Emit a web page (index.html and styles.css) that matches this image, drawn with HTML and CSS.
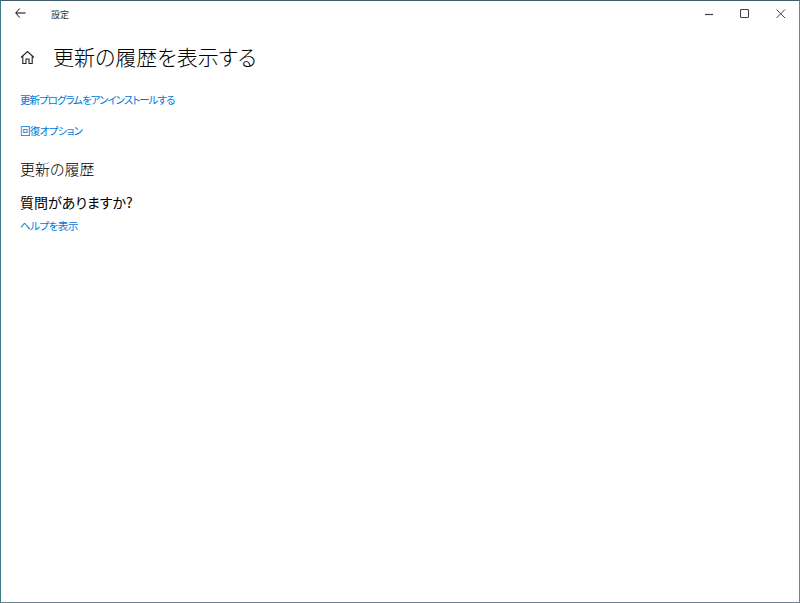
FILE: index.html
```html
<!DOCTYPE html>
<html lang="ja">
<head>
    <meta charset="UTF-8">
    <meta name="viewport" content="width=device-width, initial-scale=1.0">
    <title>設定</title>
    <link rel="stylesheet" href="styles.css">
</head>
<body>
    <div class="window">
        <div class="titlebar">
            <div class="titlebar-left">
                <svg class="back-icon" width="11" height="10" viewBox="0 0 11 10">
                    <path d="M4.700 .5 .7 5 4.700 9.500M1 5H10.500" fill="none" stroke="#000" stroke-width="1"/>
                </svg>
                <span class="app-title">設定</span>
            </div>
            <div class="window-buttons">
                <svg width="10" height="10" viewBox="0 0 10 10"><path d="M1 5.500H9" stroke="#444" stroke-width="1.200"/></svg>
                <svg width="10" height="10" viewBox="0 0 10 10"><rect x=".5" y=".5" width="8" height="8" rx="1" fill="none" stroke="#444" stroke-width="1.100"/></svg>
                <svg width="10" height="10" viewBox="0 0 10 10"><path d="M.5 .5 9 9M9 .5 .5 9" stroke="#444" stroke-width="1"/></svg>
            </div>
        </div>
        <div class="content">
            <div class="page-header">
                <svg class="home-icon" width="15" height="15" viewBox="0 0 15 15">
                    <path d="M1 7.500 7.500 1.500 14 7.500M2.800 6V13.500H6V9H9V13.500H12.200V6" fill="none" stroke="#222" stroke-width="1.100"/>
                </svg>
                <h1>更新の履歴を表示する</h1>
            </div>
            <a class="link uninstall" href="#">更新プログラムをアンインストールする</a>
            <a class="link recovery" href="#">回復オプション</a>
            <h2 class="history">更新の履歴</h2>
            <h2 class="question">質問がありますか?</h2>
            <a class="link help" href="#">ヘルプを表示</a>
        </div>
    </div>
</body>
</html>
```

FILE: styles.css
```css
* {
    box-sizing: border-box;
}

html, body {
    height: 100%;
}

body {
    margin: 0;
    font-family: "Noto Sans CJK JP", "Noto Sans", sans-serif;
    font-feature-settings: "palt";
    background-color: white;
    color: #000;
}

.window {
    height: 603px;
    border-top: 1px solid #3d5a6c;
    border-left: 1px solid #3f7a8a;
    border-right: 1px solid #808080;
    border-bottom: 1px solid #6f8088;
    background-color: white;
}

.titlebar {
    display: flex;
    justify-content: space-between;
    align-items: center;
    height: 26px;
}

.titlebar-left {
    display: flex;
    align-items: center;
    padding-left: 14px;
}

.back-icon {
    margin-bottom: 2px;
}

.app-title {
    margin-left: 25px;
    font-size: 9px;
    color: #333;
}

.window-buttons {
    display: flex;
    gap: 26px;
    padding-right: 13px;
}

.content {
    padding: 13px 19px 0;
}

.page-header {
    display: flex;
    align-items: center;
    height: 34px;
}

.home-icon {
    margin-right: 18px;
}

h1 {
    margin: 0;
    padding-bottom: 2px;
    font-size: 21px;
    font-weight: 300;
    line-height: 32px;
}

h2 {
    margin: 0;
    font-size: 15px;
    font-weight: 300;
    line-height: 20px;
}

.link {
    display: block;
    font-size: 10.500px;
    line-height: 16px;
    color: #0078d7;
    text-decoration: none;
}

.uninstall {
    margin-top: 18px;
    letter-spacing: -1px;
}

.recovery {
    margin-top: 15px;
    letter-spacing: -.7px;
}

.help {
    letter-spacing: -.5px;
}

.history {
    margin-top: 20px;
}

.question {
    margin-top: 13px;
    margin-bottom: 6px;
    font-size: 14px;
    font-weight: 400;
}
```
